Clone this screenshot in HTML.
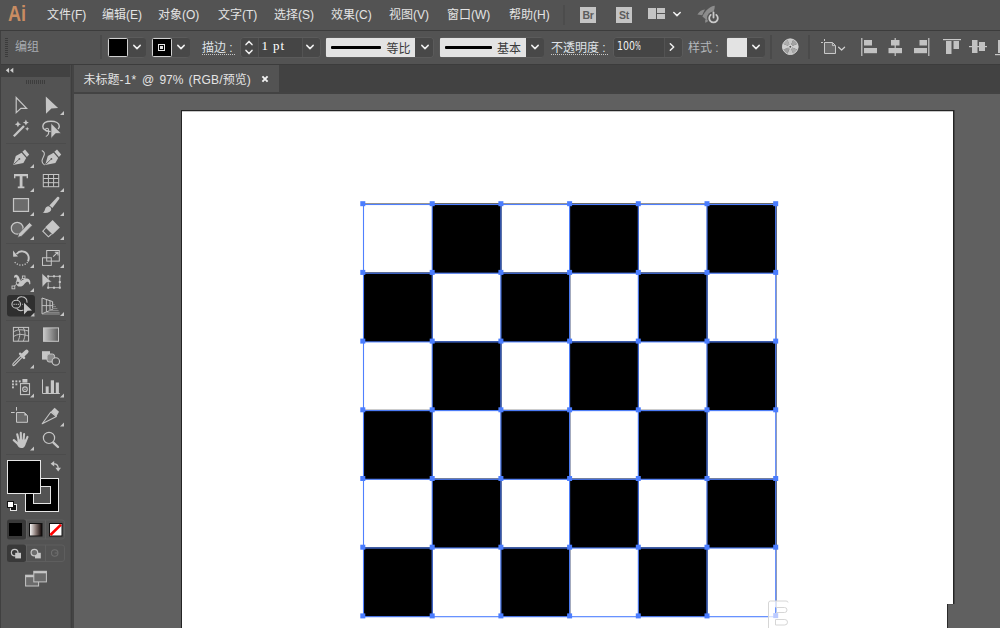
<!DOCTYPE html>
<html lang="zh-CN">
<head>
<meta charset="utf-8">
<title>未标题-1* @ 97% (RGB/预览)</title>
<style>
*{box-sizing:border-box;margin:0;padding:0}
html,body{width:1000px;height:628px;overflow:hidden;background:#606060}
body{position:relative;font-family:"Liberation Sans","Noto Sans CJK SC",sans-serif;font-size:12px;color:#e6e6e6;-webkit-font-smoothing:antialiased}
.abs{position:absolute}
#menubar{position:absolute;left:0;top:0;width:1000px;height:30px;background:#535353}
#menubar .mi{position:absolute;top:0;height:30px;line-height:30px;white-space:nowrap;color:#e4e4e4;font-size:12px}
#sep1{position:absolute;left:0;top:30px;width:1000px;height:1px;background:#3c3c3c}
#ctrl{position:absolute;left:0;top:31px;width:1000px;height:33px;background:#535353}
#sep2{position:absolute;left:0;top:64px;width:1000px;height:1px;background:#3c3c3c}
#tabbar{position:absolute;left:72px;top:65px;width:928px;height:29px;background:#424242}
#tab{position:absolute;left:74px;top:65px;width:205px;height:27px;background:#535353}
#tab .t{position:absolute;left:9px;top:2px;height:27px;line-height:27px;white-space:nowrap;color:#e4e4e4;font-size:12px}
#tabline{position:absolute;left:72px;top:92px;width:928px;height:2px;background:#434343}
#tools{position:absolute;left:0;top:65px;width:72px;height:563px;background:#535353}
#toolhead{position:absolute;left:0;top:65px;width:72px;height:12px;background:#424242}
#toolgap{position:absolute;left:70px;top:65px;width:4px;height:563px;background:linear-gradient(to right,#4b4b4b 0 1px,#3e3e3e 1px 2px,#444 2px 4px)}
#canvas{position:absolute;left:74px;top:94px;width:926px;height:534px;background:#606060;overflow:hidden}
#artboard{position:absolute;left:107px;top:16px;width:773px;height:560px;background:#fff;border:1px solid #242424;box-shadow:inset 0 1px 0 rgba(0,0,0,0.22),1px 0 0 rgba(0,0,0,0.28)}
.lbl{position:absolute;white-space:nowrap;font-size:12px;line-height:31px;top:0;height:31px}
.ic{position:absolute;overflow:visible}

.dd{position:absolute;top:6px;height:19px;background:#484848;border-radius:0 3px 3px 0}
.fld{position:absolute;top:6px;height:19px;background:#454545}
.grp{position:absolute;top:5px;height:21px;border:1px solid #5b5b5b;border-radius:4px}
.sw{position:absolute;top:6px;height:19px;border:1px solid #d0d0d0;border-radius:1.5px;background:#000}
.light{position:absolute;top:6px;height:19px;background:#e3e3e3;color:#3a3a3a;font-size:12px;line-height:19px}
.vsep{position:absolute;top:3px;width:2px;height:24px;background:#4a4a4a}
.dot{border-bottom:1px dotted #c8c8c8}
.mono{font-family:"Liberation Mono",monospace;font-size:13px;display:inline-block;transform:scaleX(0.77);transform-origin:0 50%;color:#eaeaea;position:absolute;white-space:pre;line-height:19px;top:5.4px;height:19px}
.al{fill:#c2c2c2}
.serif12{font-family:"Liberation Serif",serif;font-size:13px;line-height:19px;top:4.4px;height:19px;color:#fff}
.thin12{font-family:"DejaVu Sans Condensed","DejaVu Sans","Liberation Sans",sans-serif;font-size:11.6px;line-height:19px;top:5.1px;height:19px;color:#f4f4f4;display:inline-block;transform:scaleX(0.9);transform-origin:0 50%;white-space:pre}
</style>
</head>
<body>
<div id="menubar">
  <span class="mi" style="left:47px">文件(F)</span>
  <span class="mi" style="left:102px">编辑(E)</span>
  <span class="mi" style="left:158px">对象(O)</span>
  <span class="mi" style="left:218px">文字(T)</span>
  <span class="mi" style="left:274px">选择(S)</span>
  <span class="mi" style="left:331px">效果(C)</span>
  <span class="mi" style="left:389px">视图(V)</span>
  <span class="mi" style="left:447px">窗口(W)</span>
  <span class="mi" style="left:509px">帮助(H)</span>
<span class="abs" style="left:8px;top:0;height:30px;line-height:27px;font-size:22px;font-weight:bold;color:#c98c62;transform:scaleX(0.82);transform-origin:0 50%;white-space:nowrap">Ai</span>
<div class="vsep" style="left:563px;top:5px;height:20px;width:2px;background:#4c4c4c"></div>
<div class="abs" style="left:580px;top:7px;width:16px;height:16px;background:#c4c4c4;color:#5c5c5c;font-size:10.5px;font-weight:bold;line-height:16.5px;text-align:center;letter-spacing:-0.3px">Br</div>
<div class="abs" style="left:616px;top:7px;width:16px;height:16px;background:#c4c4c4;color:#5c5c5c;font-size:10.5px;font-weight:bold;line-height:16.5px;text-align:center;letter-spacing:-0.3px">St</div>
<svg class="ic" style="left:647px;top:7px" width="19" height="13" viewBox="647 7 19 13" shape-rendering="crispEdges"><g fill="#c4c4c4"><rect x="648" y="8" width="7.5" height="11"/><rect x="657" y="8" width="8" height="4.7"/><rect x="657" y="14" width="8" height="5"/></g></svg>
<svg class="ic" style="left:671px;top:8px" width="12" height="12" viewBox="-6 -6 12 12"><path d="M-3.2 -1.5L0 1.6L3.2 -1.5" fill="none" stroke="#f0f0f0" stroke-width="1.5" stroke-linecap="round" stroke-linejoin="round"/></svg>
<svg class="ic" style="left:696px;top:4px" width="25" height="21" viewBox="696 4 25 21">
<path d="M714.8 5.8C710 6.4 705.4 10.2 702.4 16.4L706.6 20C711.6 16.6 714.8 11.4 714.8 5.8Z" fill="#8c8c8c"/>
<path d="M705 9.4C701.6 9.6 699 11.8 697.4 14.6L702.2 15.2C703 13 703.9 11 705 9.4Z" fill="#8c8c8c"/>
<path d="M705.2 19.4L705.2 22.8C707.2 22.4 708.4 21.2 709 19.6Z" fill="#8c8c8c"/>
<circle cx="713.5" cy="18" r="6.4" fill="#535353"/>
<path d="M710.7 14.9A4.3 4.3 0 1 0 716.3 14.9" fill="none" stroke="#cacaca" stroke-width="1.8" stroke-linecap="round"/>
<path d="M713.5 12.4V17.6" stroke="#cacaca" stroke-width="1.8" stroke-linecap="round"/>
</svg>
</div>
<div id="sep1"></div>
<div id="ctrl"><div class="abs" style="left:0;top:1px;width:1000px;height:32px">
<div class="abs" style="left:5px;top:6px;width:3px;height:20px;background:repeating-linear-gradient(to bottom,#3b3b3b 0 1px,transparent 1px 2px)"></div>
<span class="lbl" style="left:15px;color:#a9adb2">编组</span>
<div class="vsep" style="left:100px;top:3px;height:24px;width:2px;background:#4b4b4b"></div>
<div class="grp" style="left:107px;width:39px"></div>
<div class="dd" style="left:128px;width:18px"></div>
<div class="sw" style="left:108px;width:20px"></div>
<svg class="ic" style="left:131px;top:9.4px" width="12" height="12" viewBox="-6 -6 12 12"><path d="M-3.2 -1.6 L0 1.6 L3.2 -1.6" fill="none" stroke="#f0f0f0" stroke-width="1.5" stroke-linecap="round" stroke-linejoin="round"/></svg>
<div class="grp" style="left:151px;width:39px"></div>
<div class="dd" style="left:172px;width:18px"></div>
<div class="sw" style="left:152px;width:20px"></div>
<div class="abs" style="left:158px;top:12px;width:7px;height:7px;border:1px solid #e8e8e8"></div>
<div class="abs" style="left:160px;top:14px;width:3px;height:3px;background:#e0e0e0"></div>
<svg class="ic" style="left:175px;top:9.4px" width="12" height="12" viewBox="-6 -6 12 12"><path d="M-3.2 -1.6 L0 1.6 L3.2 -1.6" fill="none" stroke="#f0f0f0" stroke-width="1.5" stroke-linecap="round" stroke-linejoin="round"/></svg>
<span class="abs dot" style="left:202px;top:8px;height:15px;line-height:17px;color:#dfe3e8;white-space:nowrap;width:33px">描边 :</span>
<div class="grp" style="left:240px;width:81px"></div>
<div class="dd" style="left:241px;width:17px;border-radius:3px 0 0 3px"></div>
<svg class="ic" style="left:243.4px;top:4.6px" width="12" height="12" viewBox="-6 -6 12 12"><path d="M-3.0 1.6 L0 -1.6 L3.0 1.6" fill="none" stroke="#f0f0f0" stroke-width="1.5" stroke-linecap="round" stroke-linejoin="round"/></svg>
<svg class="ic" style="left:243.4px;top:14.2px" width="12" height="12" viewBox="-6 -6 12 12"><path d="M-3.0 -1.6 L0 1.6 L3.0 -1.6" fill="none" stroke="#f0f0f0" stroke-width="1.5" stroke-linecap="round" stroke-linejoin="round"/></svg>
<div class="fld" style="left:259px;width:43px"></div>
<span class="abs serif12" style="left:261.6px;letter-spacing:1px;word-spacing:-0.35px;white-space:pre">1 pt</span>
<div class="dd" style="left:303px;width:17px"></div>
<svg class="ic" style="left:304px;top:9.4px" width="12" height="12" viewBox="-6 -6 12 12"><path d="M-3.2 -1.6 L0 1.6 L3.2 -1.6" fill="none" stroke="#f0f0f0" stroke-width="1.5" stroke-linecap="round" stroke-linejoin="round"/></svg>
<div class="grp" style="left:325px;width:109px"></div>
<div class="light" style="left:326px;width:89px;border-radius:1px 0 0 1px"><span class="abs" style="left:60.5px;top:1.5px">等比</span></div>
<div class="abs" style="left:331px;top:14px;width:50px;height:3px;background:#000;border-radius:1px"></div>
<div class="dd" style="left:415px;width:18px"></div>
<svg class="ic" style="left:418.5px;top:9.4px" width="12" height="12" viewBox="-6 -6 12 12"><path d="M-3.2 -1.6 L0 1.6 L3.2 -1.6" fill="none" stroke="#f0f0f0" stroke-width="1.5" stroke-linecap="round" stroke-linejoin="round"/></svg>
<div class="grp" style="left:439px;width:105px"></div>
<div class="light" style="left:440px;width:85.5px;border-radius:1px 0 0 1px"><span class="abs" style="left:57px;top:1.5px">基本</span></div>
<div class="abs" style="left:445px;top:14px;width:47px;height:3px;background:#000;border-radius:1px"></div>
<div class="dd" style="left:526px;width:18px"></div>
<svg class="ic" style="left:528.8px;top:9.4px" width="12" height="12" viewBox="-6 -6 12 12"><path d="M-3.2 -1.6 L0 1.6 L3.2 -1.6" fill="none" stroke="#f0f0f0" stroke-width="1.5" stroke-linecap="round" stroke-linejoin="round"/></svg>
<span class="abs dot" style="left:551px;top:8px;height:15px;line-height:17px;color:#dfe3e8;white-space:nowrap;width:57px;letter-spacing:0">不透明度 :</span>
<div class="grp" style="left:613px;width:70px"></div>
<div class="fld" style="left:614px;width:50px;border-radius:3px 0 0 3px"></div>
<span class="abs thin12" style="left:616.8px">100<span style="display:inline-block;transform:scaleX(0.66);transform-origin:0 50%;margin-left:-0.3px">%</span></span>
<div class="dd" style="left:665px;width:17px"></div>
<svg class="ic" style="left:666.3px;top:9.4px" width="12" height="12" viewBox="-6 -6 12 12"><path d="M-1.7 -3.3 L1.7 0 L-1.7 3.3" fill="none" stroke="#f0f0f0" stroke-width="1.5" stroke-linecap="round" stroke-linejoin="round"/></svg>
<span class="lbl" style="left:688px;top:1.2px;color:#b4b8bc">样式 :</span>
<div class="grp" style="left:726px;width:39px"></div>
<div class="light" style="left:727px;width:19.5px;border-radius:1px 0 0 1px"></div>
<div class="dd" style="left:747px;width:18px"></div>
<svg class="ic" style="left:749.6px;top:9.4px" width="12" height="12" viewBox="-6 -6 12 12"><path d="M-3.2 -1.6 L0 1.6 L3.2 -1.6" fill="none" stroke="#f0f0f0" stroke-width="1.5" stroke-linecap="round" stroke-linejoin="round"/></svg>
<div class="vsep" style="left:770px"></div>
<svg class="ic" style="left:781px;top:5px" width="19" height="19" viewBox="-9.3 -9.7 19 19"><path d="M0 0L7.30 -3.02A7.9 7.9 0 0 1 7.30 3.02Z" fill="#d0d0d0"/><path d="M0 0L7.30 3.02A7.9 7.9 0 0 1 3.02 7.30Z" fill="#a8a8a8"/><path d="M0 0L3.02 7.30A7.9 7.9 0 0 1 -3.02 7.30Z" fill="#c4c4c4"/><path d="M0 0L-3.02 7.30A7.9 7.9 0 0 1 -7.30 3.02Z" fill="#9c9c9c"/><path d="M0 0L-7.30 3.02A7.9 7.9 0 0 1 -7.30 -3.02Z" fill="#cfcfcf"/><path d="M0 0L-7.30 -3.02A7.9 7.9 0 0 1 -3.02 -7.30Z" fill="#adadad"/><path d="M0 0L-3.02 -7.30A7.9 7.9 0 0 1 3.02 -7.30Z" fill="#c6c6c6"/><path d="M0 0L3.02 -7.30A7.9 7.9 0 0 1 7.30 -3.02Z" fill="#a2a2a2"/><circle r="7.8" fill="none" stroke="#d2d2d2" stroke-width="1"/><circle r="2.1" fill="#dadada"/><circle r="1" fill="#505050"/></svg>
<div class="vsep" style="left:808px"></div>
<svg class="ic" style="left:819px;top:6px" width="30" height="20" viewBox="819 38 30 20">
<path d="M824.5 42.5H832.5L835.5 45.5V53.5H824.5Z" fill="#6a6a6a" stroke="#c8c8c8" stroke-width="1"/>
<path d="M832.4 42.8V45.6H835.2" fill="none" stroke="#c8c8c8" stroke-width="0.9"/>
<path d="M824.5 39V41M821 42.5H823" stroke="#c8c8c8" stroke-width="1" fill="none"/>
<path d="M838.6 47.2L841.6 50L844.6 47.2" fill="none" stroke="#d0d0d0" stroke-width="1.2" stroke-linecap="round" stroke-linejoin="round"/>
</svg>
<svg class="ic" style="left:855px;top:0" width="145" height="31" viewBox="855 32 145 31">
<g class="al">
<rect x="861" y="38" width="1.5" height="18" fill="#b0b0b0"/><rect x="864" y="40" width="8" height="5.5"/><rect x="864" y="48" width="13" height="5.2"/>
<rect x="894.5" y="38" width="1.5" height="18" fill="#b0b0b0"/><rect x="891" y="40" width="8.5" height="5.5"/><rect x="888.5" y="48" width="13.5" height="5.2"/>
<rect x="928" y="38" width="1.5" height="18" fill="#b0b0b0"/><rect x="919.5" y="40" width="7.5" height="5.5"/><rect x="914" y="48" width="13" height="5.2"/>
<rect x="943" y="39" width="18" height="1.2" fill="#c8c8c8"/><rect x="946" y="41" width="5.5" height="13"/><rect x="953.5" y="41" width="5.5" height="8"/>
<rect x="969" y="46" width="18" height="1.2" fill="#c8c8c8"/><rect x="972" y="40" width="5.5" height="13"/><rect x="979" y="42" width="6" height="9"/>
<rect x="995" y="54" width="5" height="1.2" fill="#c8c8c8"/><rect x="998" y="40" width="2" height="13"/>
</g></svg>
</div></div>
<div id="sep2"></div>
<div id="tabbar"></div>
<div id="tab"><span class="t" style="left:9.5px;word-spacing:1.8px">未标题<span style="letter-spacing:0.7px">-1*</span> @ 97% <span style="letter-spacing:0.15px">(RGB/</span>预览)</span><svg class="ic" style="left:186px;top:9px" width="10" height="10" viewBox="-5 -5 10 10"><path d="M-2.6 -2.6L2.6 2.6M2.6 -2.6L-2.6 2.6" stroke="#f2f2f2" stroke-width="1.9"/></svg></div>
<div id="tabline"></div>
<div id="canvas">
  <div id="artboard"></div>
</div>
<svg class="abs" id="grid" style="left:0;top:0" width="1000" height="628" viewBox="0 0 1000 628">
<rect x="363.00" y="203.10" width="413.60" height="1" fill="#8f8a80"/>
<rect x="776.10" y="203.10" width="0.9" height="413.60" fill="#9a9a9a"/>
<rect x="432.00" y="203.70" width="69.60" height="69.60" fill="#000"/>
<rect x="569.40" y="203.70" width="69.60" height="69.60" fill="#000"/>
<rect x="706.80" y="203.70" width="69.60" height="69.60" fill="#000"/>
<rect x="363.30" y="272.40" width="69.60" height="69.60" fill="#000"/>
<rect x="500.70" y="272.40" width="69.60" height="69.60" fill="#000"/>
<rect x="638.10" y="272.40" width="69.60" height="69.60" fill="#000"/>
<rect x="432.00" y="341.10" width="69.60" height="69.60" fill="#000"/>
<rect x="569.40" y="341.10" width="69.60" height="69.60" fill="#000"/>
<rect x="706.80" y="341.10" width="69.60" height="69.60" fill="#000"/>
<rect x="363.30" y="409.80" width="69.60" height="69.60" fill="#000"/>
<rect x="500.70" y="409.80" width="69.60" height="69.60" fill="#000"/>
<rect x="638.10" y="409.80" width="69.60" height="69.60" fill="#000"/>
<rect x="432.00" y="478.50" width="69.60" height="69.60" fill="#000"/>
<rect x="569.40" y="478.50" width="69.60" height="69.60" fill="#000"/>
<rect x="706.80" y="478.50" width="69.60" height="69.60" fill="#000"/>
<rect x="363.30" y="547.20" width="69.60" height="69.60" fill="#000"/>
<rect x="500.70" y="547.20" width="69.60" height="69.60" fill="#000"/>
<rect x="638.10" y="547.20" width="69.60" height="69.60" fill="#000"/>
<rect x="362.95" y="204.00" width="1.1" height="413.20" fill="#4f80ff"/>
<rect x="431.65" y="204.00" width="1.1" height="413.20" fill="#4f80ff"/>
<rect x="500.35" y="204.00" width="1.1" height="413.20" fill="#4f80ff"/>
<rect x="569.05" y="204.00" width="1.1" height="413.20" fill="#4f80ff"/>
<rect x="637.75" y="204.00" width="1.1" height="413.20" fill="#4f80ff"/>
<rect x="706.45" y="204.00" width="1.1" height="413.20" fill="#4f80ff"/>
<rect x="775.15" y="204.00" width="1.1" height="413.20" fill="#4f80ff"/>
<rect x="363.00" y="203.95" width="413.20" height="1.1" fill="#4f80ff"/>
<rect x="363.00" y="272.65" width="413.20" height="1.1" fill="#4f80ff"/>
<rect x="363.00" y="341.35" width="413.20" height="1.1" fill="#4f80ff"/>
<rect x="363.00" y="410.05" width="413.20" height="1.1" fill="#4f80ff"/>
<rect x="363.00" y="478.75" width="413.20" height="1.1" fill="#4f80ff"/>
<rect x="363.00" y="547.45" width="413.20" height="1.1" fill="#4f80ff"/>
<rect x="363.00" y="616.15" width="413.20" height="1.1" fill="#4f80ff"/>
<rect x="360.30" y="201.20" width="5" height="5" fill="#4a7dff"/>
<rect x="360.30" y="269.90" width="5" height="5" fill="#4a7dff"/>
<rect x="360.30" y="338.60" width="5" height="5" fill="#4a7dff"/>
<rect x="360.30" y="407.30" width="5" height="5" fill="#4a7dff"/>
<rect x="360.30" y="476.00" width="5" height="5" fill="#4a7dff"/>
<rect x="360.30" y="544.70" width="5" height="5" fill="#4a7dff"/>
<rect x="360.30" y="613.40" width="5" height="5" fill="#4a7dff"/>
<rect x="429.70" y="201.20" width="5" height="5" fill="#4a7dff"/>
<rect x="429.70" y="269.90" width="5" height="5" fill="#4a7dff"/>
<rect x="429.70" y="338.60" width="5" height="5" fill="#4a7dff"/>
<rect x="429.70" y="407.30" width="5" height="5" fill="#4a7dff"/>
<rect x="429.70" y="476.00" width="5" height="5" fill="#4a7dff"/>
<rect x="429.70" y="544.70" width="5" height="5" fill="#4a7dff"/>
<rect x="429.70" y="613.40" width="5" height="5" fill="#4a7dff"/>
<rect x="498.40" y="201.20" width="5" height="5" fill="#4a7dff"/>
<rect x="498.40" y="269.90" width="5" height="5" fill="#4a7dff"/>
<rect x="498.40" y="338.60" width="5" height="5" fill="#4a7dff"/>
<rect x="498.40" y="407.30" width="5" height="5" fill="#4a7dff"/>
<rect x="498.40" y="476.00" width="5" height="5" fill="#4a7dff"/>
<rect x="498.40" y="544.70" width="5" height="5" fill="#4a7dff"/>
<rect x="498.40" y="613.40" width="5" height="5" fill="#4a7dff"/>
<rect x="567.10" y="201.20" width="5" height="5" fill="#4a7dff"/>
<rect x="567.10" y="269.90" width="5" height="5" fill="#4a7dff"/>
<rect x="567.10" y="338.60" width="5" height="5" fill="#4a7dff"/>
<rect x="567.10" y="407.30" width="5" height="5" fill="#4a7dff"/>
<rect x="567.10" y="476.00" width="5" height="5" fill="#4a7dff"/>
<rect x="567.10" y="544.70" width="5" height="5" fill="#4a7dff"/>
<rect x="567.10" y="613.40" width="5" height="5" fill="#4a7dff"/>
<rect x="635.80" y="201.20" width="5" height="5" fill="#4a7dff"/>
<rect x="635.80" y="269.90" width="5" height="5" fill="#4a7dff"/>
<rect x="635.80" y="338.60" width="5" height="5" fill="#4a7dff"/>
<rect x="635.80" y="407.30" width="5" height="5" fill="#4a7dff"/>
<rect x="635.80" y="476.00" width="5" height="5" fill="#4a7dff"/>
<rect x="635.80" y="544.70" width="5" height="5" fill="#4a7dff"/>
<rect x="635.80" y="613.40" width="5" height="5" fill="#4a7dff"/>
<rect x="704.50" y="201.20" width="5" height="5" fill="#4a7dff"/>
<rect x="704.50" y="269.90" width="5" height="5" fill="#4a7dff"/>
<rect x="704.50" y="338.60" width="5" height="5" fill="#4a7dff"/>
<rect x="704.50" y="407.30" width="5" height="5" fill="#4a7dff"/>
<rect x="704.50" y="476.00" width="5" height="5" fill="#4a7dff"/>
<rect x="704.50" y="544.70" width="5" height="5" fill="#4a7dff"/>
<rect x="704.50" y="613.40" width="5" height="5" fill="#4a7dff"/>
<rect x="773.20" y="201.20" width="5" height="5" fill="#4a7dff"/>
<rect x="773.20" y="269.90" width="5" height="5" fill="#4a7dff"/>
<rect x="773.20" y="338.60" width="5" height="5" fill="#4a7dff"/>
<rect x="773.20" y="407.30" width="5" height="5" fill="#4a7dff"/>
<rect x="773.20" y="476.00" width="5" height="5" fill="#4a7dff"/>
<rect x="773.20" y="544.70" width="5" height="5" fill="#4a7dff"/>
<g id="wm">
<rect x="769" y="601" width="178" height="27" fill="#fff" fill-opacity="0.74"/>
<rect x="775.2" y="607.3" width="1.1" height="5.8" fill="#4f80ff"/>
<rect x="773.2" y="613.1" width="5" height="5" fill="#bccbff"/>
<rect x="948" y="604" width="7" height="24" fill="#606060"/>
<rect x="947" y="604" width="1" height="24" fill="#2a2a2a"/>
<rect x="948" y="604" width="5" height="1" fill="#555"/>
<g fill="none" stroke="#d6d6d6" stroke-width="1">
<path d="M768.5 628V603Q768.5 601 770.5 601H786Q788 601 788 602.5"/>
<path d="M776 607.5H784.5Q787 607.5 787 610T784.5 612.5H776"/>
<path d="M775.5 619.5H784.8Q787.5 619.5 787.5 622.2T784.8 625H775.5Z"/>
</g>
</g>
</svg>
<div id="tools"></div>
<div id="toolhead"></div>
<div id="toolgap"></div>
<div id="ledge" class="abs" style="left:0;top:31px;width:1px;height:597px;background:#404040"></div>
<svg class="abs" id="toolsvg" style="left:0;top:65px" width="74" height="563" viewBox="0 65 74 563">
<path d="M9.1 67.7L5.8 70.3L9.1 72.9ZM13.3 67.7L10 70.3L13.3 72.9Z" fill="#cdcdcd"/>
<rect x="26" y="80" width="1" height="4" fill="#3d3d3d" shape-rendering="crispEdges"/>
<rect x="28" y="80" width="1" height="4" fill="#3d3d3d" shape-rendering="crispEdges"/>
<rect x="30" y="80" width="1" height="4" fill="#3d3d3d" shape-rendering="crispEdges"/>
<rect x="32" y="80" width="1" height="4" fill="#3d3d3d" shape-rendering="crispEdges"/>
<rect x="34" y="80" width="1" height="4" fill="#3d3d3d" shape-rendering="crispEdges"/>
<rect x="36" y="80" width="1" height="4" fill="#3d3d3d" shape-rendering="crispEdges"/>
<rect x="38" y="80" width="1" height="4" fill="#3d3d3d" shape-rendering="crispEdges"/>
<rect x="40" y="80" width="1" height="4" fill="#3d3d3d" shape-rendering="crispEdges"/>
<rect x="42" y="80" width="1" height="4" fill="#3d3d3d" shape-rendering="crispEdges"/>
<rect x="44" y="80" width="1" height="4" fill="#3d3d3d" shape-rendering="crispEdges"/>
<rect x="6" y="143" width="60" height="1" fill="#4c4c4c" shape-rendering="crispEdges"/>
<rect x="6" y="243" width="60" height="1" fill="#4c4c4c" shape-rendering="crispEdges"/>
<rect x="6" y="320" width="60" height="1" fill="#4c4c4c" shape-rendering="crispEdges"/>
<rect x="6" y="372" width="60" height="1" fill="#4c4c4c" shape-rendering="crispEdges"/>
<rect x="6" y="401" width="60" height="1" fill="#4c4c4c" shape-rendering="crispEdges"/>
<rect x="6" y="454" width="60" height="1" fill="#4c4c4c" shape-rendering="crispEdges"/>
<path d="M16.2 97.6V112.6L20.9 108.3H26.6Z" fill="none" stroke="#c6c6c6" stroke-width="1.2" stroke-linejoin="miter"/>
<path d="M45.8 96.4L58.1 107.9L51.4 108.4L46 113.7Z" fill="#c6c6c6"/>
<path d="M64 111V115H60Z" fill="#c6c6c6"/>
<path d="M13.8 136.2L24 126" stroke="#c6c6c6" stroke-width="2.3" stroke-linecap="butt"/>
<path d="M17.90 121.10L18.89 123.21L21.00 124.20L18.89 125.19L17.90 127.30L16.91 125.19L14.80 124.20L16.91 123.21Z" fill="#c6c6c6"/>
<path d="M25.90 119.60L26.85 121.65L28.90 122.60L26.85 123.55L25.90 125.60L24.95 123.55L22.90 122.60L24.95 121.65Z" fill="#c6c6c6"/>
<path d="M27.20 126.70L27.87 128.13L29.30 128.80L27.87 129.47L27.20 130.90L26.53 129.47L25.10 128.80L26.53 128.13Z" fill="#c6c6c6"/>
<path d="M52 131.6C46 131.8 42.6 129 42.8 126.2C43 123 46.5 121.2 51 121.2C55.5 121.2 59.3 123 59.3 126.2C59.3 127.3 58.8 128.2 58 129" fill="none" stroke="#c6c6c6" stroke-width="1.4"/>
<circle cx="47" cy="129.8" r="1.5" fill="none" stroke="#c6c6c6" stroke-width="1.1"/>
<path d="M48.4 130.5C49 133 48 135.6 45.8 136.4" fill="none" stroke="#c6c6c6" stroke-width="1.1"/>
<path d="M51 123.2V138.4L55.6 133.6L61 133.2Z" fill="#c6c6c6" stroke="#535353" stroke-width="0.6"/>
<g transform="translate(0 0.9)"><path d="M13.2 164L15.8 155.2L21.6 151.8L26.2 157L23.4 162.2Z" fill="#c6c6c6"/><path d="M22.4 150.8L25 148.6L29.2 153.6L26.9 156Z" fill="#c6c6c6"/><path d="M13.8 163.4L18.8 158.6" stroke="#535353" stroke-width="0.9"/><circle cx="19.4" cy="158" r="0.9" fill="#535353"/></g>
<path d="M34 164V168H30Z" fill="#c6c6c6"/>
<g transform="translate(32 0.9)"><path d="M13.2 164L15.8 155.2L21.6 151.8L26.2 157L23.4 162.2Z" fill="#c6c6c6"/><path d="M22.4 150.8L25 148.6L29.2 153.6L26.9 156Z" fill="#c6c6c6"/><path d="M13.8 163.4L18.8 158.6" stroke="#535353" stroke-width="0.9"/><circle cx="19.4" cy="158" r="0.9" fill="#535353"/></g>
<path d="M41.8 150.4C44.6 151.6 45 154 43.6 156.6C42 159.6 40.6 162.6 44.6 165" fill="none" stroke="#c6c6c6" stroke-width="1.1"/>
<path d="M14 174H28V178.2H26.6V176.2H22.5V186.5H24.4V188.2H17.8V186.5H19.7V176.2H15.4V178.2H14Z" fill="#c6c6c6"/>
<path d="M34 188V192H30Z" fill="#c6c6c6"/>
<rect x="43.3" y="174.5" width="15.4" height="12.2" fill="#474747" stroke="#c6c6c6" stroke-width="1"/>
<path d="M48.4 174.5V186.7M53.6 174.5V186.7M43.3 178.5H58.7M43.3 182.7H58.7" stroke="#c6c6c6" stroke-width="1" fill="none"/>
<path d="M64 188V192H60Z" fill="#c6c6c6"/>
<rect x="13.5" y="198.6" width="15" height="12.8" fill="#6b6b6b" stroke="#c6c6c6" stroke-width="1.2"/>
<path d="M34 212V216H30Z" fill="#c6c6c6"/>
<path d="M57.6 196.8C59 196.4 59.8 197.6 59.2 199L52.4 208L49.4 205.4L56.8 197.4Z" fill="#c6c6c6"/>
<path d="M49 206.4C50.6 207 51.4 208.2 51.2 209.8C50.8 212.2 47.6 213.4 42.6 212.8C44.6 211.8 44.6 210.4 45.2 208.8C45.8 207 47.4 206 49 206.4Z" fill="#c6c6c6"/>
<path d="M64 212V216H60Z" fill="#c6c6c6"/>
<circle cx="17.2" cy="228.2" r="5.9" fill="#6b6b6b" stroke="#c6c6c6" stroke-width="1.2"/>
<path d="M29.4 222.6L32.4 225.2L21.6 236.2L17.6 237.4L18.8 233.6Z" fill="#c6c6c6" stroke="#535353" stroke-width="0.7"/>
<path d="M34 236V240H30Z" fill="#c6c6c6"/>
<path d="M52.6 220L59.8 227.4L52.6 234.6L45.2 227.2Z" fill="#c6c6c6"/>
<path d="M45.6 228L42.8 231.2L48.4 236.8L51.6 234" fill="none" stroke="#c6c6c6" stroke-width="1.1"/>
<path d="M64 236V240H60Z" fill="#c6c6c6"/>
<path d="M16.5 254C19.5 250.4 25 250.4 27.6 254.2C29 256.4 29 259 28 261.4" fill="none" stroke="#c6c6c6" stroke-width="1.9"/>
<path d="M13 250.6L18 256.6L13.2 256.8Z" fill="#c6c6c6"/>
<path d="M27.6 262C25 266 18 266.6 14.2 261.4" fill="none" stroke="#c6c6c6" stroke-width="1.3" stroke-dasharray="1.2 1.5"/>
<path d="M34 264V268H30Z" fill="#c6c6c6"/>
<rect x="46.7" y="250.5" width="12.6" height="10.6" fill="none" stroke="#c6c6c6" stroke-width="1"/>
<rect x="42.5" y="257.8" width="8.8" height="7.6" fill="none" stroke="#c6c6c6" stroke-width="1"/>
<path d="M53.2 256.6L57.6 252.4M54.8 252.2H58V255.4" fill="none" stroke="#c6c6c6" stroke-width="1.1"/>
<path d="M64 264V268H60Z" fill="#c6c6c6"/>
<path d="M14.2 278C13.6 275.8 15.2 274.4 17 275C19.2 275.8 19.6 278.6 20.4 281.2C22 280.6 23.6 279 26 278.6C28.6 278.2 30.6 280.2 30.4 283.4C30.3 284.6 29.4 284.8 29.2 283.8C28.8 282 27.6 281.4 26.2 282.2C24.4 283.2 23.6 286.4 20 286.6C17.6 286.6 16 285 16.2 282.4C16.4 280.4 17.4 278.8 16.4 277.6C15.8 277 15 277.6 14.2 278Z" fill="#c6c6c6"/>
<path d="M13.4 287.2L23.4 277.4" stroke="#c6c6c6" stroke-width="0.9"/>
<rect x="12" y="286" width="2.8" height="2.8" fill="#535353" stroke="#c6c6c6" stroke-width="0.9"/>
<rect x="22.4" y="276" width="2.6" height="2.6" fill="#535353" stroke="#c6c6c6" stroke-width="0.9"/>
<circle cx="17.8" cy="282.8" r="1.6" fill="#535353" stroke="#c6c6c6" stroke-width="0.9"/>
<path d="M34 288V292H30Z" fill="#c6c6c6"/>
<rect x="48.2" y="276.3" width="11.6" height="11.4" fill="none" stroke="#c6c6c6" stroke-width="0.9"/>
<rect x="47.2" y="275.3" width="2" height="2" fill="#c6c6c6"/>
<rect x="53" y="275.3" width="2" height="2" fill="#c6c6c6"/>
<rect x="58.8" y="275.3" width="2" height="2" fill="#c6c6c6"/>
<rect x="58.8" y="281" width="2" height="2" fill="#c6c6c6"/>
<rect x="58.8" y="286.7" width="2" height="2" fill="#c6c6c6"/>
<rect x="53" y="286.7" width="2" height="2" fill="#c6c6c6"/>
<rect x="47.2" y="286.7" width="2" height="2" fill="#c6c6c6"/>
<path d="M42 273.4L51.8 282L46.6 282.6L42.2 287.2Z" fill="#c6c6c6" stroke="#535353" stroke-width="0.5"/>
<rect x="7" y="295" width="28" height="21.5" rx="3" fill="#2f2f2f"/>
<path d="M17.2 299.6C18 297.6 20 296.6 22 296.8C25.4 297 27.4 299.6 27 302.6" fill="none" stroke="#c6c6c6" stroke-width="1.1"/>
<ellipse cx="16.2" cy="304.2" rx="4.3" ry="3.9" fill="none" stroke="#c6c6c6" stroke-width="1.1"/>
<path d="M17 308.6C18.6 310.6 21.4 311 23.4 310" fill="none" stroke="#c6c6c6" stroke-width="1.1"/>
<path d="M13.6 304.3H22.6" stroke="#c6c6c6" stroke-width="1.2" stroke-dasharray="1 1.1"/>
<path d="M24 302.8V314.6L27.6 310.8L32 310.4Z" fill="#c6c6c6"/>
<path d="M34.5 312.5V316.5H30.5Z" fill="#c6c6c6"/>
<path d="M42 298L52.6 301.6V309.4L42 313.8Z" fill="none" stroke="#c6c6c6" stroke-width="1"/>
<path d="M46.4 299.6V312M50 300.8V310.6M42 305.6H52.6" fill="none" stroke="#c6c6c6" stroke-width="0.9"/>
<path d="M52.8 304.6H54.6M52.8 306.6H56M52 308.6H57.4M49 310.6H58.6M45.6 312.4H59.6" fill="none" stroke="#8a8a8a" stroke-width="1"/>
<path d="M42 314H59.8" stroke="#a0a0a0" stroke-width="0.9"/>
<path d="M64 312V316H60Z" fill="#c6c6c6"/>
<rect x="13.4" y="327.4" width="15.2" height="13.8" fill="none" stroke="#c6c6c6" stroke-width="1"/>
<path d="M13.4 332C17 329.6 20 329 28.6 331M13.4 336.6C18 333.6 22 334 28.6 336M18 327.4C20.4 332 20.4 336 18 341.2M23.2 327.4C25.6 332 25.6 336 23.2 341.2" fill="none" stroke="#c6c6c6" stroke-width="0.9"/>
<defs><linearGradient id="g1" x1="0" x2="1" y1="0" y2="0"><stop offset="0" stop-color="#c8c8c8"/><stop offset="1" stop-color="#5a5a5a"/></linearGradient><linearGradient id="g2" x1="0" x2="1" y1="0" y2="0"><stop offset="0" stop-color="#fff"/><stop offset="0.5" stop-color="#8a7a76"/><stop offset="1" stop-color="#0a0000"/></linearGradient></defs>
<rect x="43.5" y="327.9" width="15" height="13.4" fill="url(#g1)" stroke="#c6c6c6" stroke-width="1"/>
<path d="M22 357.4L14.6 365C13.8 365.8 12.6 366 12.8 364.4C12.9 363.6 13.4 363.2 14 362.6L20.8 355.8" fill="none" stroke="#c6c6c6" stroke-width="1.1"/>
<path d="M20.2 353.8L24 357.8" stroke="#c6c6c6" stroke-width="2.6" stroke-linecap="round"/>
<path d="M22.8 355.2L26.6 351.6" stroke="#c6c6c6" stroke-width="4" stroke-linecap="round"/>
<path d="M34 364.5V368.5H30Z" fill="#c6c6c6"/>
<rect x="42" y="351.2" width="8" height="8.4" fill="#c6c6c6"/>
<rect x="47" y="354" width="7.6" height="8" rx="2.2" fill="#8a8a8a" stroke="#c6c6c6" stroke-width="1"/>
<circle cx="55.8" cy="361.4" r="3.7" fill="#535353" stroke="#c6c6c6" stroke-width="1.1"/>
<rect x="20.5" y="383.6" width="9" height="11" fill="none" stroke="#c6c6c6" stroke-width="1.1"/>
<rect x="22.4" y="379" width="5" height="3.6" fill="#c6c6c6"/>
<circle cx="25" cy="389.2" r="2.3" fill="none" stroke="#c6c6c6" stroke-width="1.1"/><circle cx="25" cy="389.2" r="0.8" fill="#c6c6c6"/>
<rect x="12" y="380.4" width="1.9" height="1.9" fill="#c6c6c6"/>
<rect x="15.4" y="380.4" width="1.9" height="1.9" fill="#c6c6c6"/>
<rect x="18.8" y="380.4" width="1.9" height="1.9" fill="#c6c6c6"/>
<rect x="12" y="383.4" width="1.9" height="1.9" fill="#c6c6c6"/>
<rect x="15.4" y="383.4" width="1.9" height="1.9" fill="#c6c6c6"/>
<rect x="12" y="386.4" width="1.9" height="1.9" fill="#c6c6c6"/>
<path d="M34 393.5V397.5H30Z" fill="#c6c6c6"/>
<path d="M42.5 379.4V393.5H59.8" fill="none" stroke="#c6c6c6" stroke-width="1"/>
<rect x="45.7" y="386.4" width="3" height="6.6" fill="#c6c6c6"/><rect x="50.8" y="380.3" width="3.2" height="12.7" fill="#c6c6c6"/><rect x="55.8" y="382.5" width="3.1" height="10.5" fill="#c6c6c6"/>
<path d="M64 393.5V397.5H60Z" fill="#c6c6c6"/>
<path d="M16.5 412.5H24.4L27.5 415.6V422.3H16.5Z" fill="#6b6b6b" stroke="#c6c6c6" stroke-width="1"/>
<path d="M24.4 412.6V415.6H27.4Z" fill="#c6c6c6"/>
<path d="M16.5 407V410.6M11 412.5H14.7" stroke="#c6c6c6" stroke-width="1" fill="none"/>
<path d="M42.2 423.8L50.8 412L56.4 416.6Z" fill="none" stroke="#c6c6c6" stroke-width="1.1" stroke-linejoin="round"/>
<path d="M51 411.6L54.6 407.8L59 411.8L56.4 416.4Z" fill="#c6c6c6"/>
<path d="M64 422.5V426.5H60Z" fill="#c6c6c6"/>
<g stroke="#c6c6c6" stroke-linecap="round" fill="none"><path d="M13.8 440.2L18.8 444.6" stroke-width="2.3"/><path d="M17.2 434.2L18.9 441" stroke-width="2.1"/><path d="M20.8 432.9L21 441" stroke-width="2.1"/><path d="M24.1 434.1L23.4 441" stroke-width="2.1"/><path d="M27.5 436.9L25.2 442.6" stroke-width="2.1"/></g>
<path d="M17.6 439.6H26.2L25.6 444.4Q24.6 448 21.2 448Q18.4 448 17.4 445Z" fill="#c6c6c6"/>
<path d="M34 446.5V450.5H30Z" fill="#c6c6c6"/>
<circle cx="49" cy="437.9" r="5.6" fill="none" stroke="#c6c6c6" stroke-width="1.2"/>
<path d="M53.4 442.6L58 447" stroke="#c6c6c6" stroke-width="2.4" stroke-linecap="round"/>
<g shape-rendering="crispEdges">
<rect x="25" y="478" width="34" height="34" fill="#e6e6e6"/><rect x="26" y="479" width="32" height="32" fill="#000"/><rect x="33" y="486" width="18" height="18" fill="#e6e6e6"/><rect x="34" y="487" width="16" height="16" fill="#535353"/>
<rect x="7" y="460" width="34" height="34" fill="#e6e6e6"/><rect x="8" y="461" width="32" height="32" fill="#000"/>
<rect x="10" y="504" width="7" height="7" fill="#e6e6e6"/><rect x="11" y="505" width="5" height="5" fill="#111"/><rect x="7" y="501" width="7" height="7" fill="#111"/><rect x="8" y="502" width="5" height="5" fill="#fff"/>
</g>
<path d="M54 463.8C57.2 463.8 58.2 465.4 58.2 468.4" fill="none" stroke="#c6c6c6" stroke-width="1.3"/>
<path d="M50.6 463.8L54.2 461V466.6Z" fill="#c6c6c6"/><path d="M58.2 471.4L55.4 467.8H61Z" fill="#c6c6c6"/>
<rect x="7.5" y="520" width="57" height="19" rx="2.5" fill="none" stroke="#5e5e5e" stroke-width="1"/>
<rect x="7" y="519.5" width="19" height="20" rx="2.5" fill="#393939"/>
<path d="M26.5 520V539M45.5 520V539" stroke="#5e5e5e" stroke-width="1"/>
<rect x="9" y="523" width="13" height="13" fill="#000"/>
<rect x="29.5" y="523.5" width="12.5" height="12.5" fill="url(#g2)" stroke="#111" stroke-width="1"/>
<rect x="49.5" y="523.5" width="12.5" height="12.5" fill="#fff" stroke="#111" stroke-width="1"/>
<path d="M50.4 535L61 524.6" stroke="#f00" stroke-width="2.6"/>
<rect x="7.5" y="545" width="57" height="16.5" rx="2.5" fill="none" stroke="#5e5e5e" stroke-width="1"/>
<rect x="7" y="544.5" width="19" height="17.5" rx="2.5" fill="#393939"/>
<path d="M26.5 545V561.5M45.5 545V561.5" stroke="#5e5e5e" stroke-width="1"/>
<circle cx="14.7" cy="552.6" r="3.3" fill="none" stroke="#c6c6c6" stroke-width="1.2"/><rect x="15.2" y="552.8" width="5.8" height="5.6" fill="#c6c6c6"/>
<rect x="35" y="552.8" width="5.8" height="5.6" fill="#c6c6c6"/><circle cx="34.4" cy="552.6" r="3.3" fill="#6e6e6e" stroke="#c6c6c6" stroke-width="1.2"/>
<circle cx="54.7" cy="553" r="3.2" fill="none" stroke="#6e6e6e" stroke-width="1.1"/><path d="M54.7 553H57.6" stroke="#6e6e6e" stroke-width="1"/>
<rect x="25.6" y="575.2" width="13" height="10.8" fill="#6b6b6b" stroke="#c6c6c6" stroke-width="1"/><rect x="25.6" y="575.2" width="13" height="2" fill="#c6c6c6"/>
<rect x="33.8" y="571.3" width="12.6" height="10.6" fill="#6b6b6b" stroke="#c6c6c6" stroke-width="1"/><rect x="33.8" y="571.3" width="12.6" height="2" fill="#c6c6c6"/>
</svg>
</body>
</html>
